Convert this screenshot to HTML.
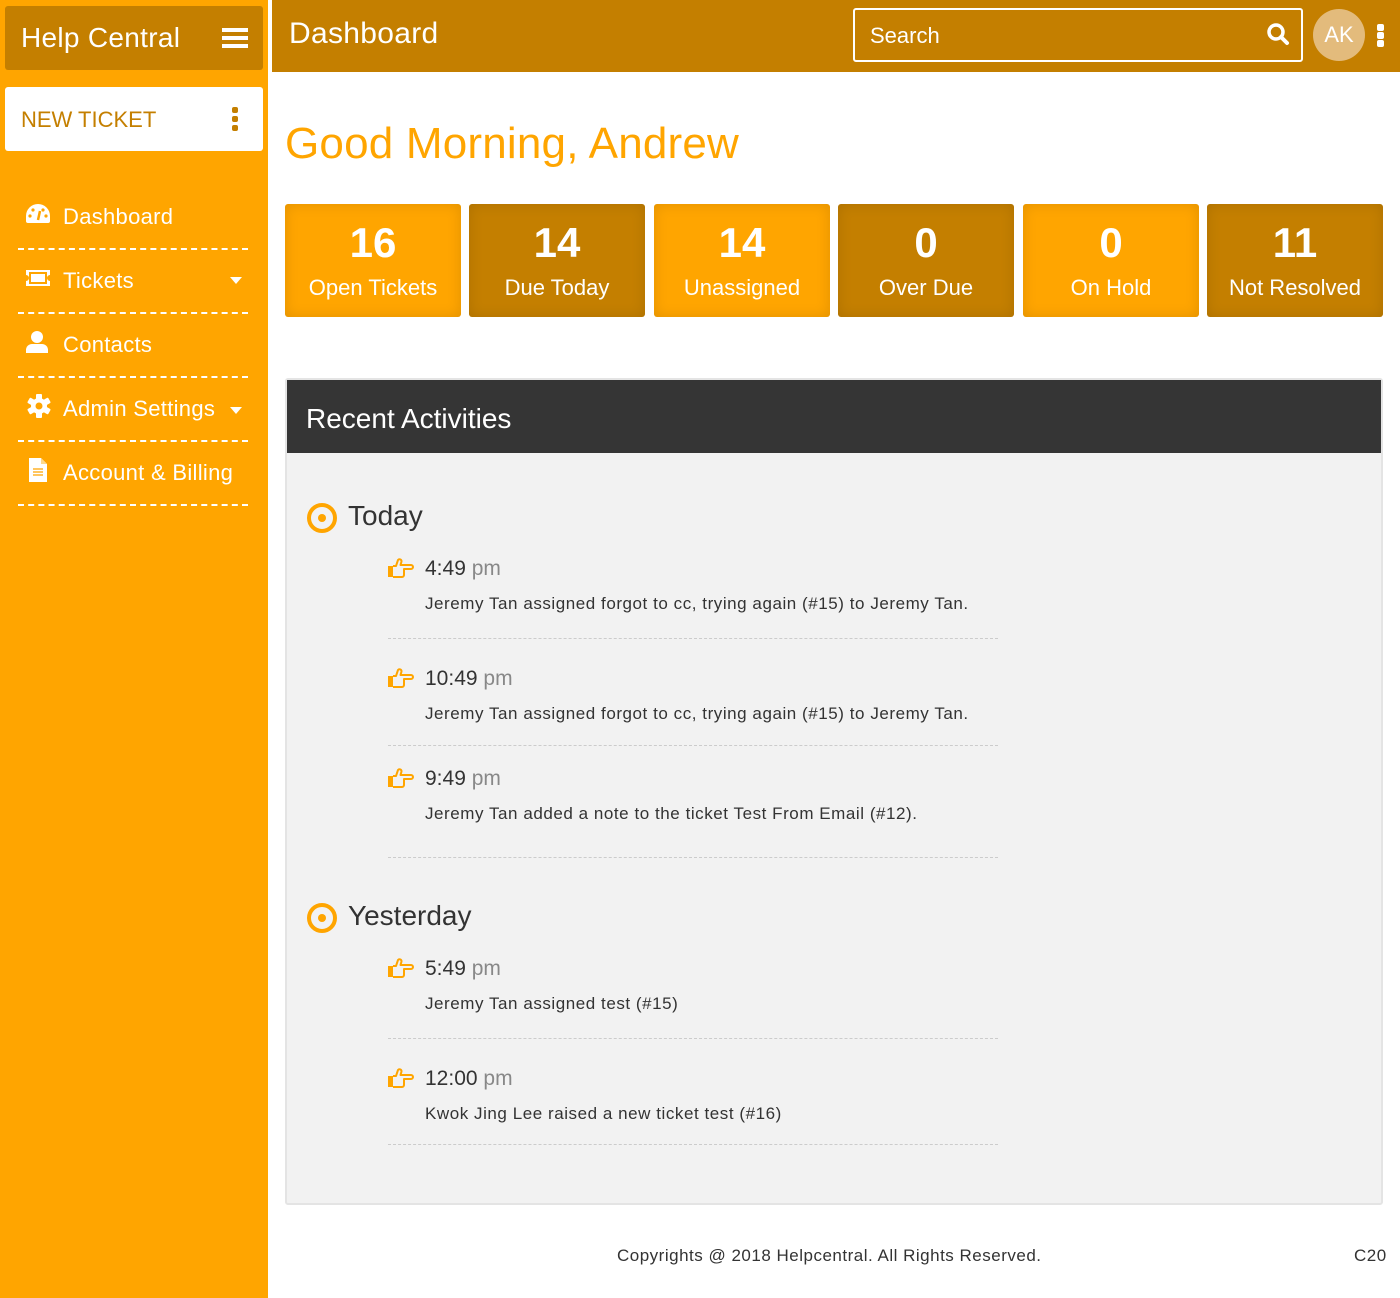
<!DOCTYPE html>
<html><head><meta charset="utf-8"><style>
*{margin:0;padding:0;box-sizing:border-box}
body{width:1400px;height:1298px;position:relative;background:#fff;font-family:"Liberation Sans",sans-serif;overflow:hidden}
.abs{position:absolute}
#side{left:0;top:0;width:268px;height:1298px;background:#ffa500}
.brand{left:5px;top:6px;width:258px;height:64px;background:#c47f00;border-radius:3px;color:#fff;font-size:28px;line-height:64px;padding-left:16px;letter-spacing:0.3px}
.ham{left:222px;top:28px;width:26px;height:4px;background:#fff;box-shadow:0 8px 0 #fff,0 16px 0 #fff}
.newt{left:5px;top:87px;width:258px;height:64px;background:#fff;border-radius:3px;color:#c47f00;font-size:22px;line-height:66px;padding-left:16px}
.dot3{width:6px;height:6px;border-radius:2px;background:#c47f00}
.nav{left:18px;width:230px;height:64px;border-bottom:2px dashed #fff;color:#fff;font-size:22px;letter-spacing:0.3px}
.nav span{position:absolute;left:45px;top:18px}
.nav svg{position:absolute;left:7px}
.caret{position:absolute;width:0;height:0;border-left:6px solid transparent;border-right:6px solid transparent;border-top:7px solid #fff}
#top{left:272px;top:0;width:1128px;height:72px;background:#c47f00}
.title{left:289px;top:17px;color:#fff;font-size:30px;letter-spacing:0.3px}
.search{left:853px;top:8px;width:450px;height:54px;border:2px solid #fff;border-radius:3px;color:#fff;font-size:22px;line-height:52px;padding-left:15px}
.av{left:1313px;top:9px;width:52px;height:52px;border-radius:50%;background:#e3bb7c;color:#fff;font-size:22px;line-height:52px;text-align:center}
.wdot{width:7px;height:7px;border-radius:2px;background:#fff}
h1{position:absolute;left:285px;top:119px;color:#ffa500;font-size:44px;font-weight:normal;letter-spacing:0.2px}
.stat{top:204px;width:176px;height:113px;border-radius:3px;color:#fff;text-align:center;box-shadow:inset 0 0 14px rgba(0,0,0,.12)}
.stat b{display:block;font-size:42px;margin-top:17px;line-height:44px}
.stat i{display:block;font-style:normal;font-size:22px;margin-top:10px}
.l{background:#ffa500}.d{background:#c47f00}
.panel{left:285px;top:378px;width:1098px;height:827px;background:#f2f2f2;border:2px solid #e4e4e4;border-radius:3px}
.ph{left:287px;top:380px;width:1094px;height:73px;background:#353535;color:#fff;font-size:28px;line-height:78px;padding-left:19px}
.day{left:307px;color:#333;font-size:28px}
.ring{position:absolute;left:0;top:5px;width:30px;height:30px;border:4px solid #ffa500;border-radius:50%}
.ring:after{content:"";position:absolute;left:7px;top:7px;width:8px;height:8px;background:#ffa500;border-radius:50%}
.time{left:425px;color:#333;font-size:21px}
.time em{font-style:normal;color:#888}
.desc{left:425px;color:#333;font-size:17px;letter-spacing:0.55px}
.hr{left:388px;width:610px;border-top:1px dashed #ccc}
.hand{left:387px}
.foot{top:1246px;color:#333;font-size:17px;letter-spacing:0.5px}
</style></head><body>
<div id="side" class="abs"></div>
<div class="abs brand">Help Central</div>
<div class="abs ham"></div>
<div class="abs newt">NEW TICKET</div>
<div class="abs dot3" style="left:232px;top:107px"></div>
<div class="abs dot3" style="left:232px;top:116px"></div>
<div class="abs dot3" style="left:232px;top:125px"></div>

<div class="abs nav" style="top:186px"><svg style="top:17px" width="26" height="22" viewBox="0 0 26 22"><path d="M13 1A12 12 0 0 0 1 13v5a2 2 0 0 0 2 2h20a2 2 0 0 0 2-2v-5A12 12 0 0 0 13 1z" fill="#fff"/><path d="M13 17l2-9" stroke="#ffa500" stroke-width="2.5"/><circle cx="5" cy="13" r="1.6" fill="#ffa500"/><circle cx="8" cy="7" r="1.6" fill="#ffa500"/><circle cx="21" cy="13" r="1.6" fill="#ffa500"/><circle cx="18" cy="7" r="1.6" fill="#ffa500"/></svg><span>Dashboard</span></div>
<div class="abs nav" style="top:250px"><svg style="top:18px" width="26" height="20" viewBox="0 0 26 20"><path d="M1 2h24v5a3 3 0 0 0 0 6v5H1v-5a3 3 0 0 0 0-6z" fill="#fff"/><rect x="5" y="5" width="16" height="10" fill="none" stroke="#ffa500" stroke-width="2"/></svg><span>Tickets</span><div class="caret" style="left:212px;top:27px"></div></div>
<div class="abs nav" style="top:314px"><svg style="top:16px" width="24" height="24" viewBox="0 0 24 24"><circle cx="12" cy="7" r="6" fill="#fff"/><path d="M1 23v-3a6 6 0 0 1 6-6h10a6 6 0 0 1 6 6v3z" fill="#fff"/></svg><span>Contacts</span></div>
<div class="abs nav" style="top:378px"><svg style="top:16px;left:9px" width="24" height="24" viewBox="0 0 24 24"><g fill="#fff"><circle cx="12" cy="12" r="8"/><rect x="9" y="0" width="6" height="24" rx="1"/><rect x="9" y="0" width="6" height="24" rx="1" transform="rotate(60 12 12)"/><rect x="9" y="0" width="6" height="24" rx="1" transform="rotate(120 12 12)"/></g><circle cx="12" cy="12" r="3.5" fill="#ffa500"/></svg><span>Admin Settings</span><div class="caret" style="left:212px;top:29px"></div></div>
<div class="abs nav" style="top:442px"><svg style="top:16px;left:11px" width="18" height="24" viewBox="0 0 18 24"><path d="M0 0h12l6 6v18H0z" fill="#fff"/><path d="M12 0v6h6" fill="#ffd98a"/><path d="M4 11h10M4 14h10M4 17h10" stroke="#ffa500" stroke-width="1.3"/></svg><span>Account &amp; Billing</span></div>

<div id="top" class="abs"></div>
<div class="abs title">Dashboard</div>
<div class="abs search">Search</div>
<svg class="abs" style="left:1266px;top:22px" width="24" height="24" viewBox="0 0 24 24"><circle cx="10" cy="10" r="7" fill="none" stroke="#fff" stroke-width="3.5"/><path d="M15 15l6 6" stroke="#fff" stroke-width="4" stroke-linecap="round"/></svg>
<div class="abs av">AK</div>
<div class="abs wdot" style="left:1377px;top:24px"></div>
<div class="abs wdot" style="left:1377px;top:32px"></div>
<div class="abs wdot" style="left:1377px;top:40px"></div>

<h1>Good Morning, Andrew</h1>
<div class="abs stat l" style="left:285px"><b>16</b><i>Open Tickets</i></div>
<div class="abs stat d" style="left:469px"><b>14</b><i>Due Today</i></div>
<div class="abs stat l" style="left:654px"><b>14</b><i>Unassigned</i></div>
<div class="abs stat d" style="left:838px"><b>0</b><i>Over Due</i></div>
<div class="abs stat l" style="left:1023px"><b>0</b><i>On Hold</i></div>
<div class="abs stat d" style="left:1207px"><b>11</b><i>Not Resolved</i></div>

<div class="abs panel"></div>
<div class="abs ph">Recent Activities</div>

<div class="abs day" style="top:500px"><div class="ring" style="top:3px"></div><span style="margin-left:41px">Today</span></div>
<div class="abs day" style="top:900px"><div class="ring" style="top:3px"></div><span style="margin-left:41px">Yesterday</span></div>

<svg width="0" height="0" style="position:absolute"><defs><g id="h"><rect x="1" y="10" width="5" height="11" fill="#ffa500"/><path d="M6 10h3l2-6a2 2 0 0 1 3.5 1.5L13.5 9H24a2 2 0 0 1 0 4h-7v6a2 2 0 0 1-2 2H6" fill="none" stroke="#ffa500" stroke-width="2" stroke-linejoin="round"/></g></defs></svg>

<svg class="abs hand" style="top:556px" width="28" height="24"><use href="#h"/></svg>
<div class="abs time" style="top:557px">4:49 <em>pm</em></div>
<div class="abs desc" style="top:594px">Jeremy Tan assigned forgot to cc, trying again (#15) to Jeremy Tan.</div>
<div class="abs hr" style="top:638px"></div>

<svg class="abs hand" style="top:666px" width="28" height="24"><use href="#h"/></svg>
<div class="abs time" style="top:667px">10:49 <em>pm</em></div>
<div class="abs desc" style="top:704px">Jeremy Tan assigned forgot to cc, trying again (#15) to Jeremy Tan.</div>
<div class="abs hr" style="top:745px"></div>

<svg class="abs hand" style="top:766px" width="28" height="24"><use href="#h"/></svg>
<div class="abs time" style="top:767px">9:49 <em>pm</em></div>
<div class="abs desc" style="top:804px">Jeremy Tan added a note to the ticket Test From Email (#12).</div>
<div class="abs hr" style="top:857px"></div>

<svg class="abs hand" style="top:956px" width="28" height="24"><use href="#h"/></svg>
<div class="abs time" style="top:957px">5:49 <em>pm</em></div>
<div class="abs desc" style="top:994px">Jeremy Tan assigned test (#15)</div>
<div class="abs hr" style="top:1038px"></div>

<svg class="abs hand" style="top:1066px" width="28" height="24"><use href="#h"/></svg>
<div class="abs time" style="top:1067px">12:00 <em>pm</em></div>
<div class="abs desc" style="top:1104px">Kwok Jing Lee raised a new ticket test (#16)</div>
<div class="abs hr" style="top:1144px"></div>

<div class="abs foot" style="left:617px">Copyrights @ 2018 Helpcentral. All Rights Reserved.</div>
<div class="abs foot" style="left:1354px">C20</div>
</body></html>
